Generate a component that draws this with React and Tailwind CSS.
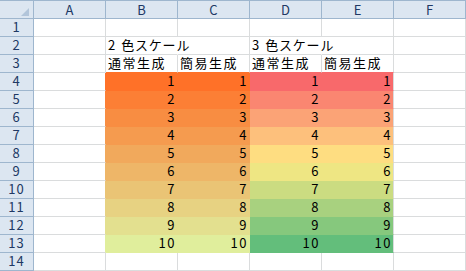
import React from "react";

const G = "border-r-[#dadcdd] border-b-[#dadcdd]";

const ROWS = [
  { v: 1, a: "border-r-[#ff7128] border-b-[#dadcdd]", two: "bg-[#ff7128] border-r-[#ff7128] border-b-[#ff7128]", d: "bg-[#f8696b] border-r-[#f8696b] border-b-[#f8696b]", e: "bg-[#f8696b] border-r-[#dadcdd] border-b-[#f8696b]" },
  { v: 2, a: "border-r-[#fc7f35] border-b-[#dadcdd]", two: "bg-[#fc7f35] border-r-[#fc7f35] border-b-[#fc7f35]", d: "bg-[#fa8671] border-r-[#fa8671] border-b-[#fa8671]", e: "bg-[#fa8671] border-r-[#dadcdd] border-b-[#fa8671]" },
  { v: 3, a: "border-r-[#f88d42] border-b-[#dadcdd]", two: "bg-[#f88d42] border-r-[#f88d42] border-b-[#f88d42]", d: "bg-[#fba376] border-r-[#fba376] border-b-[#fba376]", e: "bg-[#fba376] border-r-[#dadcdd] border-b-[#fba376]" },
  { v: 4, a: "border-r-[#f59b4f] border-b-[#dadcdd]", two: "bg-[#f59b4f] border-r-[#f59b4f] border-b-[#f59b4f]", d: "bg-[#fdc07c] border-r-[#fdc07c] border-b-[#fdc07c]", e: "bg-[#fdc07c] border-r-[#dadcdd] border-b-[#fdc07c]" },
  { v: 5, a: "border-r-[#f1a95c] border-b-[#dadcdd]", two: "bg-[#f1a95c] border-r-[#f1a95c] border-b-[#f1a95c]", d: "bg-[#fedd81] border-r-[#fedd81] border-b-[#fedd81]", e: "bg-[#fedd81] border-r-[#dadcdd] border-b-[#fedd81]" },
  { v: 6, a: "border-r-[#eeb668] border-b-[#dadcdd]", two: "bg-[#eeb668] border-r-[#eeb668] border-b-[#eeb668]", d: "bg-[#eee683] border-r-[#eee683] border-b-[#eee683]", e: "bg-[#eee683] border-r-[#dadcdd] border-b-[#eee683]" },
  { v: 7, a: "border-r-[#eac475] border-b-[#dadcdd]", two: "bg-[#eac475] border-r-[#eac475] border-b-[#eac475]", d: "bg-[#cbdc81] border-r-[#cbdc81] border-b-[#cbdc81]", e: "bg-[#cbdc81] border-r-[#dadcdd] border-b-[#cbdc81]" },
  { v: 8, a: "border-r-[#e7d282] border-b-[#dadcdd]", two: "bg-[#e7d282] border-r-[#e7d282] border-b-[#e7d282]", d: "bg-[#a8d17f] border-r-[#a8d17f] border-b-[#a8d17f]", e: "bg-[#a8d17f] border-r-[#dadcdd] border-b-[#a8d17f]" },
  { v: 9, a: "border-r-[#e3e08f] border-b-[#dadcdd]", two: "bg-[#e3e08f] border-r-[#e3e08f] border-b-[#e3e08f]", d: "bg-[#86c87d] border-r-[#86c87d] border-b-[#86c87d]", e: "bg-[#86c87d] border-r-[#dadcdd] border-b-[#86c87d]" },
  { v: 10, a: "border-r-[#e0ee9c] border-b-[#dadcdd]", two: "bg-[#e0ee9c] border-r-[#e0ee9c] border-b-[#e0ee9c]", d: "bg-[#63be7b] border-r-[#63be7b] border-b-[#63be7b]", e: "bg-[#63be7b] border-r-[#dadcdd] border-b-[#63be7b]" },
];

function Cell({ cls = G, align = "left", children }) {
  return (
    <div
      className={`relative h-[18px] border-r border-b ${cls} flex items-end ${
        align === "right" ? "justify-end pr-[1px]" : "justify-start pl-[2px]"
      } pb-[2px] whitespace-nowrap overflow-visible text-[13px] leading-[14px] text-black`}
    >
      {children}
    </div>
  );
}

function RowHead({ n }) {
  return (
    <div className="h-[18px] border-r border-b border-[#9eb6ce] bg-[#dce6f1] flex items-end justify-center pb-[2px] text-[13px] leading-[14px] text-[#203864] tracking-[1px]">
      {n}
    </div>
  );
}

const JP = "tracking-[1.5px]";

export default function App() {
  const cols = ["A", "B", "C", "D", "E", "F"];
  return (
    <div
      className="w-[466px] h-[271px] bg-white overflow-hidden grid grid-cols-[34px_repeat(6,72px)] content-start"
      style={{ fontFamily: '"Noto Sans CJK JP", "Liberation Sans", sans-serif' }}
    >
      {/* header row */}
      <div className="h-[19px] border-t border-b border-r border-[#9eb6ce] bg-[#dce6f1] relative">
        <svg className="absolute left-0 top-0" width="33" height="17" viewBox="0 0 33 17">
          <polygon points="29,7 29,15 21,15" fill="#b2c5da" />
        </svg>
      </div>
      {cols.map((c) => (
        <div
          key={c}
          className="h-[19px] border-t border-b border-r border-[#9eb6ce] bg-[#dce6f1] flex items-end justify-center pb-[1px] text-[13px] leading-[15px] text-[#203864]"
        >
          {c}
        </div>
      ))}

      {/* row 1 */}
      <RowHead n={1} />
      {cols.map((c) => (
        <Cell key={c} />
      ))}

      {/* row 2 */}
      <RowHead n={2} />
      <Cell />
      <Cell cls="border-r-white border-b-[#dadcdd]">
        <span className="relative z-10">
          2<span className="inline-block w-[6px]" />
          <span className="tracking-[0.8px]">色スケール</span>
        </span>
      </Cell>
      <Cell />
      <Cell cls="border-r-white border-b-[#dadcdd]">
        <span className="relative z-10">
          3<span className="inline-block w-[6px]" />
          <span className="tracking-[0.8px]">色スケール</span>
        </span>
      </Cell>
      <Cell />
      <Cell />

      {/* row 3 */}
      <RowHead n={3} />
      <Cell />
      <Cell cls="border-r-[#dadcdd] border-b-[#ff7128]">
        <span className={JP}>通常生成</span>
      </Cell>
      <Cell cls="border-r-[#dadcdd] border-b-[#ff7128]">
        <span className={JP}>簡易生成</span>
      </Cell>
      <Cell cls="border-r-[#dadcdd] border-b-[#f8696b]">
        <span className={JP}>通常生成</span>
      </Cell>
      <Cell cls="border-r-[#dadcdd] border-b-[#f8696b]">
        <span className={JP}>簡易生成</span>
      </Cell>
      <Cell />

      {ROWS.map((r) => (
        <React.Fragment key={r.v}>
          <RowHead n={r.v + 3} />
          <Cell cls={r.a} />
          <Cell cls={r.two} align="right">
            <span className="tracking-[1.5px]">{r.v}</span>
          </Cell>
          <Cell cls={r.two} align="right">
            <span className="tracking-[1.5px]">{r.v}</span>
          </Cell>
          <Cell cls={r.d} align="right">
            <span className="tracking-[1.5px]">{r.v}</span>
          </Cell>
          <Cell cls={r.e} align="right">
            <span className="tracking-[1.5px]">{r.v}</span>
          </Cell>
          <Cell />
        </React.Fragment>
      ))}

      {/* row 14 */}
      <RowHead n={14} />
      {cols.map((c) => (
        <Cell key={c} />
      ))}
    </div>
  );
}
